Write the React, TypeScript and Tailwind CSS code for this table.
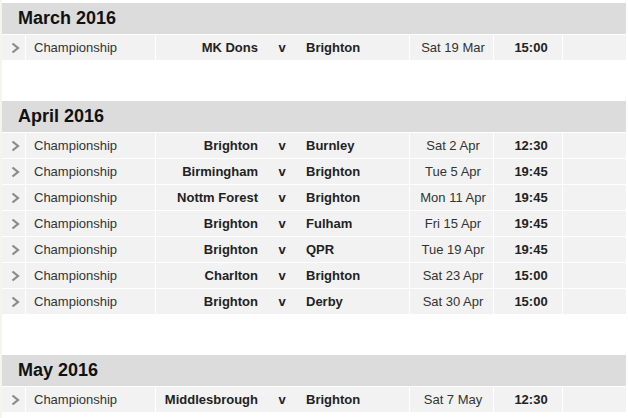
import React from 'react';

interface Fixture {
    home: string;
    away: string;
    date: string;
    time: string;
}

interface Month {
    title: string;
    fixtures: Fixture[];
}

const months: Month[] = [
    {
        title: 'March 2016',
        fixtures: [{ home: 'MK Dons', away: 'Brighton', date: 'Sat 19 Mar', time: '15:00' }],
    },
    {
        title: 'April 2016',
        fixtures: [
            { home: 'Brighton', away: 'Burnley', date: 'Sat 2 Apr', time: '12:30' },
            { home: 'Birmingham', away: 'Brighton', date: 'Tue 5 Apr', time: '19:45' },
            { home: 'Nottm Forest', away: 'Brighton', date: 'Mon 11 Apr', time: '19:45' },
            { home: 'Brighton', away: 'Fulham', date: 'Fri 15 Apr', time: '19:45' },
            { home: 'Brighton', away: 'QPR', date: 'Tue 19 Apr', time: '19:45' },
            { home: 'Charlton', away: 'Brighton', date: 'Sat 23 Apr', time: '15:00' },
            { home: 'Brighton', away: 'Derby', date: 'Sat 30 Apr', time: '15:00' },
        ],
    },
    {
        title: 'May 2016',
        fixtures: [{ home: 'Middlesbrough', away: 'Brighton', date: 'Sat 7 May', time: '12:30' }],
    },
];

const Chevron = () => (
    <svg width="9" height="12" viewBox="0 0 9 12" fill="none">
        <polyline points="1.5,1.5 7,6 1.5,10.5" stroke="#8a8a8a" strokeWidth="2.2" />
    </svg>
);

const FixtureRow = ({ fixture }: { fixture: Fixture }) => (
    <div className="grid grid-cols-[23px_129px_253px_83px_68px_1fr] gap-px h-[25px] mb-px bg-white text-[13px] text-[#333]">
        <div className="bg-[#f2f2f2] flex items-center pl-[9px]">
            <Chevron />
        </div>
        <div className="bg-[#f2f2f2] flex items-center pl-[8px]">Championship</div>
        <div className="bg-[#f2f2f2] flex items-center font-bold text-[#222]">
            <span className="w-[102px] text-right">{fixture.home}</span>
            <span className="w-[48px] text-center">v</span>
            <span>{fixture.away}</span>
        </div>
        <div className="bg-[#f2f2f2] flex items-center justify-center pl-[3px]">{fixture.date}</div>
        <div className="bg-[#f2f2f2] flex items-center justify-center font-bold text-[#222] pl-[6px]">{fixture.time}</div>
        <div className="bg-[#f2f2f2]"></div>
    </div>
);

const App = () => {
    return (
        <div className="flex h-[418px] overflow-hidden bg-white" style={{ fontFamily: '"Liberation Sans", Arial, sans-serif' }}>
            <div className="w-[2px] bg-[#f6f4ec]"></div>
            <div className="w-[624px] pt-[3px]">
                {months.map((month) => (
                    <div key={month.title} className="mb-[41px]">
                        <div className="h-[31px] mb-px bg-[#dcdcdc] flex items-center pl-[16px] text-[18px] font-bold text-[#111]">
                            {month.title}
                        </div>
                        {month.fixtures.map((fixture) => (
                            <FixtureRow key={fixture.date} fixture={fixture} />
                        ))}
                    </div>
                ))}
            </div>
        </div>
    );
};

export default App;
